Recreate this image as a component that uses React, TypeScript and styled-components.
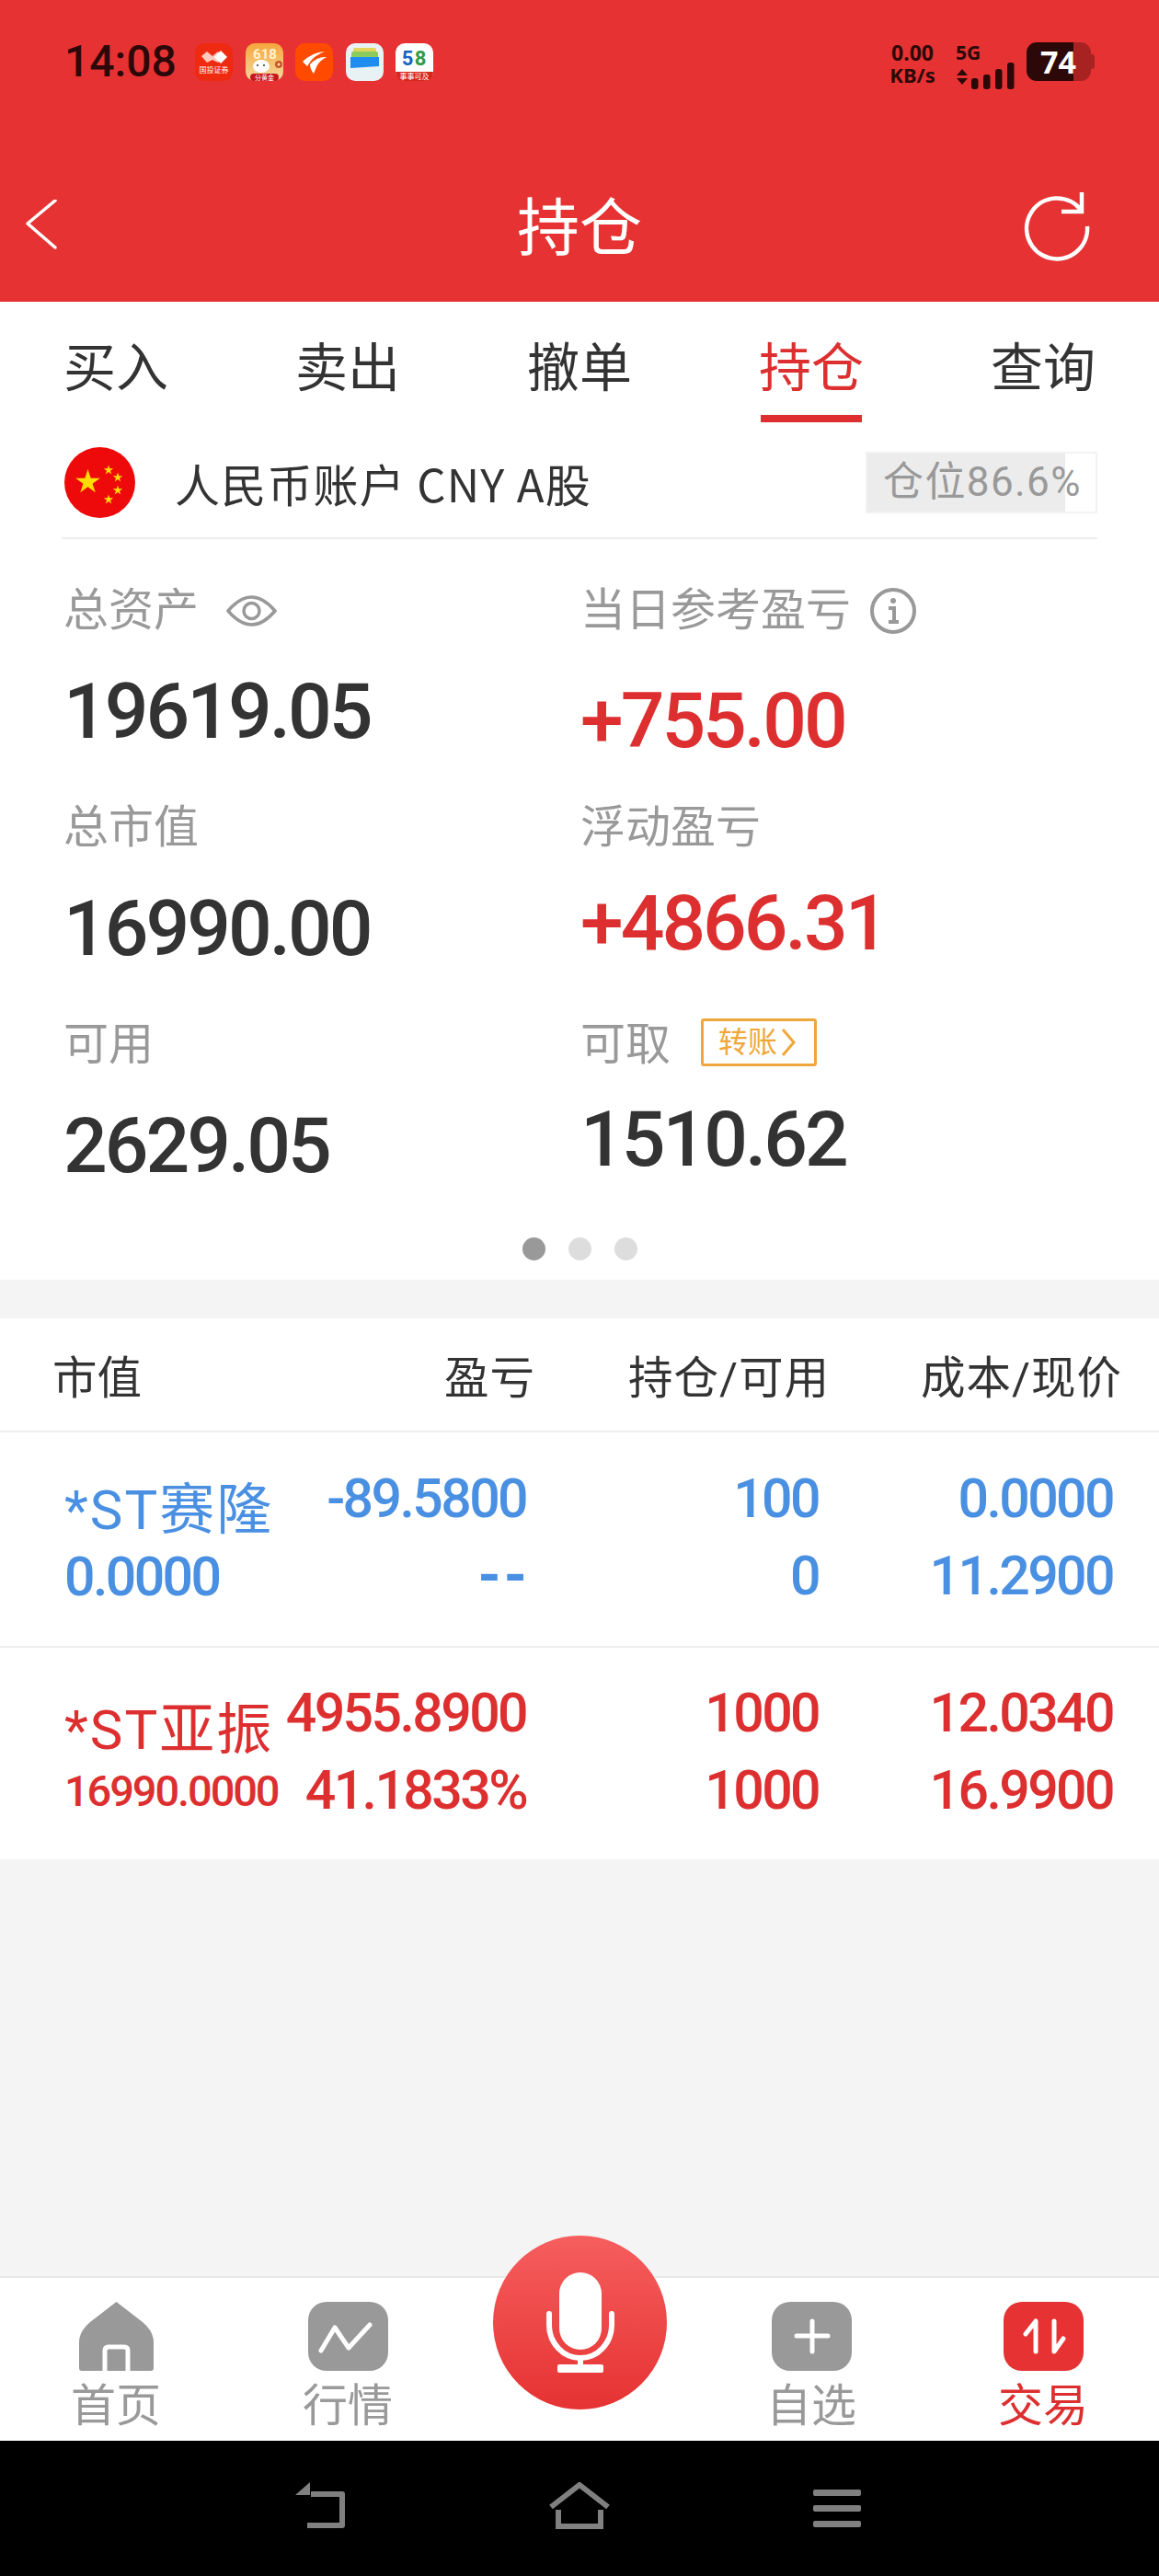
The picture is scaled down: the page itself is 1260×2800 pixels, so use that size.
import styled, { createGlobalStyle } from 'styled-components';

const RED = '#e63232';
const TEXT_RED = '#dd2f2f';
const BLUE = '#4a90e2';
const GRAY = '#999999';
const DARK = '#333333';
const STATUS_DARK = '#2d0808';

const GlobalStyle = createGlobalStyle`
  html, body {
    margin: 0;
    padding: 0;
    background: #f4f4f4;
  }
  * {
    box-sizing: border-box;
  }
`;

function starPoints(cx: number, cy: number, r: number) {
  const pts: string[] = [];
  for (let i = 0; i < 10; i++) {
    const radius = i % 2 === 0 ? r : r * 0.382;
    const angle = -Math.PI / 2 + (i * Math.PI) / 5;
    pts.push(`${cx + radius * Math.cos(angle)},${cy + radius * Math.sin(angle)}`);
  }
  return pts.join(' ');
}

const tabs = ['买入', '卖出', '撤单', '持仓', '查询'];

const positions = [
  {
    color: BLUE,
    name: '*ST赛隆',
    amount: '0.0000',
    smallAmount: false,
    profit: ['-89.5800', '--'],
    hold: ['100', '0'],
    cost: ['0.0000', '11.2900'],
  },
  {
    color: TEXT_RED,
    name: '*ST亚振',
    amount: '16990.0000',
    smallAmount: true,
    profit: ['4955.8900', '41.1833%'],
    hold: ['1000', '1000'],
    cost: ['12.0340', '16.9900'],
  },
];

function NotifyIcons() {
  return (
    <AppIcons>
      <svg width="41" height="41" viewBox="0 0 41 41">
        <rect width="41" height="41" rx="10" fill="#ee2a10" />
        <path d="M7 14 L13 9 L19 14 L25 9 L30 15 L25 21 L19 18 L13 21 Z" fill="#ffc9bd" />
        <path d="M28 8 L35 15 L28 22 L21 15 Z" fill="#fff" />
        <text x="20.5" y="32" fontSize="8" fill="#fff" textAnchor="middle" fontFamily="Noto Sans CJK SC">国投证券</text>
      </svg>
      <svg width="41" height="41" viewBox="0 0 41 41">
        <defs>
          <linearGradient id="jd" x1="0" y1="0" x2="0" y2="1">
            <stop offset="0" stopColor="#f6a63c" />
            <stop offset="1" stopColor="#f4d9a0" />
          </linearGradient>
        </defs>
        <rect width="41" height="41" rx="10" fill="url(#jd)" />
        <text x="21" y="17" fontSize="15" fill="#fff3d0" textAnchor="middle" fontFamily="Roboto" fontWeight="700">618</text>
        <ellipse cx="17" cy="25" rx="9" ry="7" fill="#fff" />
        <circle cx="13" cy="24" r="1" fill="#333" />
        <circle cx="20" cy="24" r="1" fill="#333" />
        <circle cx="36" cy="23" r="4" fill="#c9562a" />
        <circle cx="36" cy="23" r="1.5" fill="#ffe6b0" />
        <rect x="5" y="33" width="31" height="8" rx="4" fill="#c8161d" />
        <text x="20.5" y="40" fontSize="7" fill="#fff" textAnchor="middle" fontFamily="Noto Sans CJK SC">分黄金</text>
      </svg>
      <svg width="41" height="41" viewBox="0 0 41 41">
        <rect width="41" height="41" rx="10" fill="#ff4a00" />
        <path d="M8 20 Q18 10 32 9 Q22 13 17 19 L13 25 Z" fill="#fff" />
        <path d="M16 23 Q24 14 34 15 Q26 19 23 26 L20 33 Q16 28 16 23 Z" fill="#fff" />
      </svg>
      <svg width="41" height="41" viewBox="0 0 41 41">
        <rect width="41" height="41" rx="10" fill="#e8f2f4" />
        <rect x="8" y="5" width="25" height="8" rx="2" fill="#e5d45c" />
        <rect x="6" y="9" width="29" height="8" rx="2" fill="#8ccb5e" />
        <path d="M5 15 H36 V25 L5 27 Z" fill="#1f8df0" />
      </svg>
      <svg width="41" height="41" viewBox="0 0 41 41">
        <rect width="41" height="41" rx="10" fill="#fff" />
        <text x="13" y="24" fontSize="22" fill="#1565c0" textAnchor="middle" fontFamily="Roboto" fontWeight="700">5</text>
        <text x="27" y="24" fontSize="22" fill="#2e9b45" textAnchor="middle" fontFamily="Roboto" fontWeight="700">8</text>
        <path d="M0 31 H41 Q41 41 31 41 H10 Q0 41 0 31 Z" fill="#d8261c" />
        <text x="20.5" y="39" fontSize="8" fill="#fff" textAnchor="middle" fontFamily="Noto Sans CJK SC">事事可及</text>
      </svg>
    </AppIcons>
  );
}

function SignalIcon() {
  return (
    <svg width="64" height="30" viewBox="0 0 64 30">
      <path d="M1 8 L7 1 L13 8 Z M1 11 H13 L7 18 Z" fill={STATUS_DARK} transform="translate(0 6)" />
      <rect x="17" y="17" width="7.5" height="12" rx="3" fill={STATUS_DARK} />
      <rect x="30" y="13" width="7.5" height="16" rx="3" fill={STATUS_DARK} />
      <rect x="43" y="7" width="7.5" height="22" rx="3" fill={STATUS_DARK} />
      <rect x="56" y="0" width="7.5" height="29" rx="3" fill={STATUS_DARK} />
    </svg>
  );
}

function EyeIcon() {
  return (
    <svg width="55" height="42" viewBox="0 0 55 42" fill="none" stroke={GRAY} strokeWidth="3.5">
      <path d="M2 21 Q27.5 -9 53 21 Q27.5 51 2 21 Z" />
      <circle cx="27.5" cy="21" r="8.5" />
    </svg>
  );
}

function InfoIcon() {
  return (
    <InfoSvg width="52" height="52" viewBox="0 0 52 52" fill="none" stroke={GRAY} strokeWidth="4">
      <circle cx="26" cy="26" r="23" />
      <circle cx="26" cy="15" r="3" fill={GRAY} stroke="none" />
      <path d="M21 23 H27 V38 M21 38 H32" />
    </InfoSvg>
  );
}

export default function App() {
  return (
    <Screen>
      <GlobalStyle />
      <Header>
        <StatusBar>
          <StatusLeft>
            <Clock>14:08</Clock>
            <NotifyIcons />
          </StatusLeft>
          <StatusRight>
            <NetSpeed>
              <span>0.00</span>
              <small>KB/s</small>
            </NetSpeed>
            <NetType>
              <span>5G</span>
              <SignalIcon />
            </NetType>
            <Battery>
              <BatteryBody>74</BatteryBody>
              <BatteryNub />
            </Battery>
          </StatusRight>
        </StatusBar>
        <TitleBar>
          <svg width="36" height="58" viewBox="0 0 36 58" fill="none" stroke="#fff" strokeWidth="3.5">
            <path d="M33 1 L3 26 L33 52" strokeLinecap="round" strokeLinejoin="round" />
          </svg>
          <Title>持仓</Title>
          <RefreshWrap>
            <svg width="74" height="76" viewBox="0 0 74 76" fill="none" stroke="#fff" strokeWidth="4.5">
              <path d="M63 20 A33 33 0 1 0 70 38" />
              <path d="M64 1 V22 H42" />
            </svg>
          </RefreshWrap>
        </TitleBar>
      </Header>

      <Card>
        <Tabs>
          {tabs.map((tab) => (
            <Tab key={tab} $active={tab === '持仓'}>
              {tab}
            </Tab>
          ))}
        </Tabs>

        <AccountRow>
          <svg width="77" height="77" viewBox="0 0 77 77">
            <circle cx="38.5" cy="38.5" r="38.5" fill="#ee0a0a" />
            <polygon points={starPoints(25.5, 38, 14)} fill="#ffdd00" />
            <polygon points={starPoints(48, 25, 5.5)} fill="#ffdd00" />
            <polygon points={starPoints(58, 33, 5.5)} fill="#ffdd00" />
            <polygon points={starPoints(58, 47, 5.5)} fill="#ffdd00" />
            <polygon points={starPoints(48, 57, 5.5)} fill="#ffdd00" />
          </svg>
          <AccountName>人民币账户 CNY A股</AccountName>
          <PositionChip $percent={86.6}>仓位86.6%</PositionChip>
        </AccountRow>

        <Stats>
          <StatColumn>
            <Stat>
              <StatLabel>
                总资产
                <EyeIcon />
              </StatLabel>
              <StatValue>19619.05</StatValue>
            </Stat>
            <Stat>
              <StatLabel>总市值</StatLabel>
              <StatValue>16990.00</StatValue>
            </Stat>
            <Stat>
              <StatLabel>可用</StatLabel>
              <StatValue>2629.05</StatValue>
            </Stat>
          </StatColumn>
          <StatColumn>
            <Stat>
              <StatLabel>
                当日参考盈亏
                <InfoIcon />
              </StatLabel>
              <StatValue $red $drop={10}>+755.00</StatValue>
            </Stat>
            <Stat>
              <StatLabel>浮动盈亏</StatLabel>
              <StatValue $red $drop={-6}>+4866.31</StatValue>
            </Stat>
            <Stat>
              <StatLabel>
                可取
                <TransferTag>
                  转账
                  <svg width="16" height="32" viewBox="0 0 16 32" fill="none" stroke="#efa73c" strokeWidth="3">
                    <path d="M2 2 L14 16 L2 30" />
                  </svg>
                </TransferTag>
              </StatLabel>
              <StatValue $drop={-7}>1510.62</StatValue>
            </Stat>
          </StatColumn>
        </Stats>

        <Dots>
          <Dot $active />
          <Dot />
          <Dot />
        </Dots>
      </Card>

      <Table>
        <TableHead>
          <span>市值</span>
          <HeadRight>盈亏</HeadRight>
          <HeadRight>持仓/可用</HeadRight>
          <HeadRight>成本/现价</HeadRight>
        </TableHead>
        {positions.map((p) => (
          <Row key={p.name} $color={p.color}>
            <NameCell>
              <StockName>{p.name}</StockName>
              <StockAmount $small={p.smallAmount}>{p.amount}</StockAmount>
            </NameCell>
            <NumCell>
              {p.profit.map((v) => (v === '--' ? <NoData key={v}>--</NoData> : <span key={v}>{v}</span>))}
            </NumCell>
            <NumCell>
              <span>{p.hold[0]}</span>
              <span>{p.hold[1]}</span>
            </NumCell>
            <NumCell>
              {p.cost.map((v) => (
                <span key={v}>{v}</span>
              ))}
            </NumCell>
          </Row>
        ))}
      </Table>

      <Spacer />

      <BottomNav>
        <NavItem>
          <svg width="81" height="75" viewBox="0 0 81 75">
            <path d="M40.5 0 L69 22 Q81 32 81 44 V72 Q81 75 78 75 H3 Q0 75 0 72 V44 Q0 32 12 22 Z" fill={GRAY} />
            <path d="M28 75 V53 Q28 49 32 49 H49 Q53 49 53 53 V75" fill="none" stroke="#fff" strokeWidth="5" />
          </svg>
          <NavLabel>首页</NavLabel>
        </NavItem>
        <NavItem>
          <NavTile>
            <svg width="87" height="75" viewBox="0 0 87 75" fill="none" stroke="#fff" strokeWidth="5" strokeLinecap="round" strokeLinejoin="round">
              <path d="M14 53 L29 28 L44 50 L67 25" />
            </svg>
          </NavTile>
          <NavLabel>行情</NavLabel>
        </NavItem>
        <MicButton>
          <svg width="189" height="189" viewBox="0 0 189 189" fill="none" stroke="#fff" strokeWidth="6">
            <rect x="72" y="40" width="46" height="84" rx="23" fill="#fff" stroke="none" />
            <path d="M61 85 V97 A34 36 0 0 0 129 97 V85" strokeLinecap="round" />
            <path d="M95 133 V144" />
            <rect x="70" y="140" width="50" height="9" rx="2" fill="#fff" stroke="none" />
          </svg>
        </MicButton>
        <NavItem>
          <NavTile>
            <svg width="87" height="75" viewBox="0 0 87 75" fill="none" stroke="#fff" strokeWidth="5" strokeLinecap="round">
              <path d="M44 21 V54 M27 37 H61" />
            </svg>
          </NavTile>
          <NavLabel>自选</NavLabel>
        </NavItem>
        <NavItem>
          <NavTile $active>
            <svg width="87" height="75" viewBox="0 0 87 75" fill="none" stroke="#fff" strokeWidth="5" strokeLinecap="round" strokeLinejoin="round">
              <path d="M24 35 L35 21 V54 M55 21 V54 L65 40" />
            </svg>
          </NavTile>
          <NavLabel $active>交易</NavLabel>
        </NavItem>
      </BottomNav>

      <SystemBar>
        <SystemKey>
          <svg width="60" height="52" viewBox="0 0 60 52" fill="none" stroke="#808080" strokeWidth="6">
            <path d="M18 13 H52 V47 H14" strokeLinejoin="round" />
            <path d="M17 0 L1 14 H17 Z" fill="#808080" stroke="none" />
          </svg>
        </SystemKey>
        <SystemKey>
          <svg width="68" height="52" viewBox="0 0 68 52" fill="none" stroke="#808080" strokeWidth="6">
            <path d="M3 27 L34 3 L65 27" />
            <path d="M11 30 V48 H57 V30" />
          </svg>
        </SystemKey>
        <SystemKey>
          <MenuLines>
            <i />
            <i />
            <i />
          </MenuLines>
        </SystemKey>
      </SystemBar>
    </Screen>
  );
}

const Screen = styled.div`
  width: 1260px;
  height: 2800px;
  display: flex;
  flex-direction: column;
  background: #f4f4f4;
  font-family: Roboto, 'Noto Sans CJK SC', sans-serif;
  overflow: hidden;
`;

const Header = styled.header`
  height: 328px;
  background: ${RED};
  color: #fff;
`;

const StatusBar = styled.div`
  height: 164px;
  padding: 46px 70px 0 70px;
  display: flex;
  justify-content: space-between;
  align-items: flex-start;
`;

const StatusLeft = styled.div`
  display: flex;
  align-items: center;
  height: 42px;
`;

const Clock = styled.div`
  width: 142px;
  font-size: 48px;
  font-weight: 500;
  line-height: 42px;
  color: ${STATUS_DARK};
`;

const AppIcons = styled.div`
  display: flex;
  gap: 13.5px;
`;

const StatusRight = styled.div`
  display: flex;
  align-items: flex-start;
  font-family: 'Noto Sans', sans-serif;
  font-weight: 700;
  color: ${STATUS_DARK};
`;

const NetSpeed = styled.div`
  width: 56px;
  margin-right: 19px;
  display: flex;
  flex-direction: column;
  align-items: center;
  white-space: nowrap;

  span {
    display: block;
    font-size: 23px;
    line-height: 22px;
  }

  small {
    display: block;
    margin-top: 2px;
    font-size: 22px;
    line-height: 22px;
  }
`;

const NetType = styled.div`
  width: 64px;
  display: flex;
  flex-direction: column;

  span {
    display: block;
    font-size: 21px;
    line-height: 22px;
  }
`;

const Battery = styled.div`
  display: flex;
  align-items: center;
  margin-left: 13px;
`;

const BatteryBody = styled.div`
  width: 70px;
  height: 42px;
  border-radius: 11px;
  background: linear-gradient(to right, ${STATUS_DARK} 73%, #a82222 73%);
  color: #fff;
  font-size: 34px;
  line-height: 42px;
  padding-left: 15px;
`;

const BatteryNub = styled.div`
  width: 4px;
  height: 16px;
  background: #a82222;
  border-radius: 0 3px 3px 0;
`;

const TitleBar = styled.div`
  height: 164px;
  padding: 0 27px;
  display: grid;
  grid-template-columns: 1fr auto 1fr;
  align-items: center;
`;

const Title = styled.h1`
  margin: 0;
  padding-top: 5px;
  font-size: 68px;
  font-weight: 400;
  line-height: 80px;
  color: #fff;
`;

const RefreshWrap = styled.div`
  padding-right: 47px;
  display: flex;
  justify-content: flex-end;
`;

const Card = styled.section`
  background: #fff;
  height: 1063px;
`;

const Tabs = styled.nav`
  height: 131px;
  display: grid;
  grid-template-columns: repeat(5, 252px);
`;

const Tab = styled.div<{ $active?: boolean }>`
  position: relative;
  padding-top: 35px;
  text-align: center;
  font-size: 57px;
  line-height: 76px;
  color: ${(p) => (p.$active ? TEXT_RED : DARK)};

  &::after {
    content: '';
    display: ${(p) => (p.$active ? 'block' : 'none')};
    position: absolute;
    left: 71px;
    bottom: 0;
    width: 110px;
    height: 8px;
    background: ${TEXT_RED};
  }
`;

const AccountRow = styled.div`
  margin: 0 67px;
  height: 127px;
  padding: 6px 0 0 3px;
  display: flex;
  align-items: center;
  border-bottom: 2px solid #eeeeee;
`;

const AccountName = styled.div`
  margin-left: 43px;
  font-family: 'Noto Sans CJK SC', sans-serif;
  font-size: 49px;
  letter-spacing: 1.2px;
  color: ${DARK};
  flex: 1;
  white-space: nowrap;
`;

const PositionChip = styled.div<{ $percent: number }>`
  width: 252px;
  height: 67px;
  padding-left: 17px;
  border: 2px solid #f2f2f2;
  background: linear-gradient(to right, #ececec ${(p) => p.$percent}%, #fff ${(p) => p.$percent}%);
  color: ${GRAY};
  font-size: 44px;
  letter-spacing: 1.4px;
  line-height: 62px;
  white-space: nowrap;
`;

const Stats = styled.div`
  padding: 0 0 0 69px;
  height: 759px;
  display: grid;
  grid-template-columns: 562px 1fr;
`;

const StatColumn = styled.div`
  padding-top: 45px;
  display: flex;
  flex-direction: column;
`;

const Stat = styled.div`
  height: 236px;
`;

const StatLabel = styled.div`
  height: 66px;
  display: flex;
  align-items: center;
  gap: 30px;
  font-size: 49px;
  line-height: 66px;
  color: ${GRAY};
`;

const InfoSvg = styled.svg`
  margin-left: -10px;
`;

const StatValue = styled.div<{ $red?: boolean; $drop?: number }>`
  margin-top: ${(p) => 35 + (p.$drop ?? 0)}px;
  font-size: 84px;
  font-weight: 500;
  line-height: 84px;
  letter-spacing: -3px;
  color: ${(p) => (p.$red ? TEXT_RED : DARK)};
`;

const TransferTag = styled.span`
  height: 52px;
  width: 126px;
  margin: -6px 0 0 3px;
  padding-left: 16px;
  display: inline-flex;
  align-items: center;
  gap: 4px;
  border: 3px solid #efa73c;
  border-radius: 3px;
  font-size: 32px;
  color: #efa73c;
`;

const Dots = styled.div`
  display: flex;
  justify-content: center;
  gap: 25px;
`;

const Dot = styled.span<{ $active?: boolean }>`
  width: 25px;
  height: 25px;
  border-radius: 50%;
  background: ${(p) => (p.$active ? GRAY : '#dddddd')};
`;

const Table = styled.section`
  margin-top: 42px;
  background: #fff;
`;

const TableHead = styled.div`
  height: 124px;
  padding-left: 57px;
  display: grid;
  grid-template-columns: 235px 290px 320px 318px;
  align-items: center;
  border-bottom: 2px solid #eeeeee;
  font-size: 48.5px;
  color: ${DARK};
`;

const HeadRight = styled.span`
  text-align: right;
  white-space: nowrap;
  letter-spacing: 1px;
`;

const Row = styled.div<{ $color: string }>`
  height: 232px;
  padding-left: 70px;
  display: grid;
  grid-template-columns: 235px 267px 318px 320px;
  align-items: center;
  color: ${(p) => p.$color};

  & + & {
    border-top: 2px solid #eeeeee;
  }
`;

const NameCell = styled.div`
  display: flex;
  flex-direction: column;
  white-space: nowrap;
`;

const StockName = styled.div`
  padding-top: 4px;
  font-size: 60px;
  line-height: 78px;
  letter-spacing: 2px;
`;

const StockAmount = styled.div<{ $small?: boolean }>`
  font-size: ${(p) => (p.$small ? 47 : 59)}px;
  font-weight: 500;
  line-height: ${(p) => (p.$small ? 54 : 66)}px;
  letter-spacing: ${(p) => (p.$small ? -2.1 : -2.6)}px;
`;

const NumCell = styled.div`
  display: flex;
  flex-direction: column;
  align-items: flex-end;
  padding-bottom: 5px;
  font-size: 59px;
  font-weight: 500;
  line-height: 84px;
  letter-spacing: -2.6px;
`;

const NoData = styled.span`
  margin-right: -4px;
  font-weight: 700;
  font-size: 64px;
  letter-spacing: 3px;
`;

const Spacer = styled.div`
  flex: 1;
`;

const BottomNav = styled.nav`
  height: 179px;
  padding-top: 26px;
  display: grid;
  grid-template-columns: repeat(5, 252px);
  background: #fff;
  border-top: 2px solid #e8e8e8;
`;

const NavItem = styled.div`
  display: flex;
  flex-direction: column;
  align-items: center;
`;

const NavTile = styled.div<{ $active?: boolean }>`
  width: 87px;
  height: 75px;
  border-radius: 20px;
  background: ${(p) => (p.$active ? RED : GRAY)};
`;

const NavLabel = styled.div<{ $active?: boolean }>`
  margin-top: 7px;
  font-size: 49px;
  line-height: 64px;
  color: ${(p) => (p.$active ? TEXT_RED : GRAY)};
`;

const MicButton = styled.div`
  justify-self: center;
  width: 189px;
  height: 189px;
  margin-top: -72px;
  border-radius: 50%;
  background: linear-gradient(to bottom, #f65e5e, #e63232);
`;

const SystemBar = styled.div`
  height: 147px;
  padding-top: 45px;
  background: #000;
  display: flex;
  justify-content: center;
  align-items: flex-start;
`;

const SystemKey = styled.div`
  width: 280px;
  display: flex;
  justify-content: center;
`;

const MenuLines = styled.div`
  width: 52px;
  height: 52px;
  padding-top: 8px;
  display: flex;
  flex-direction: column;
  gap: 10px;

  i {
    display: block;
    height: 7px;
    border-radius: 2px;
    background: #808080;
  }
`;
